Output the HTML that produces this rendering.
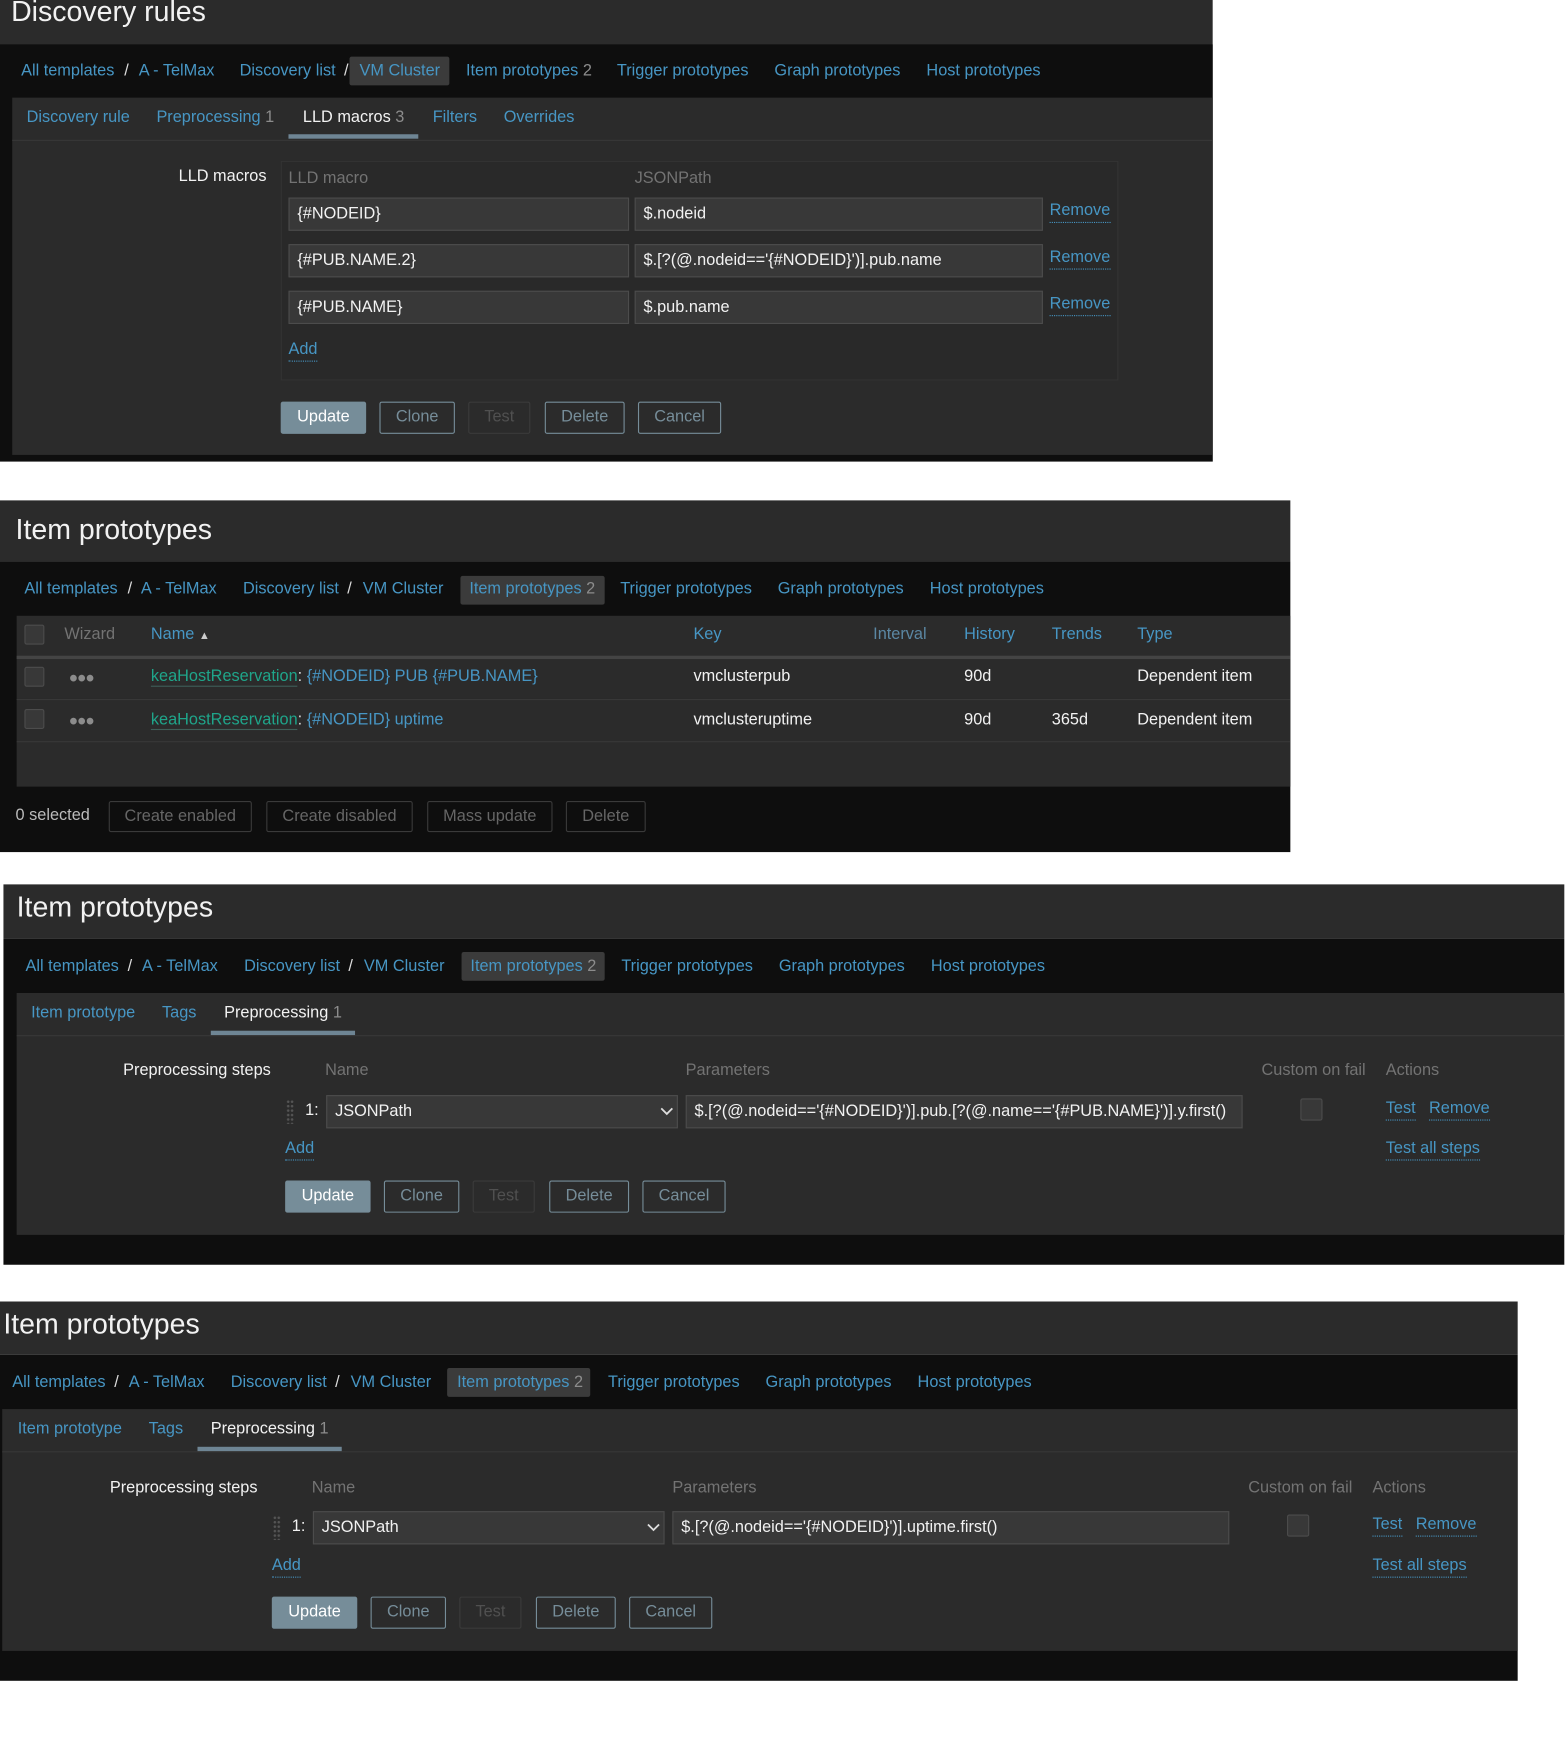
<!DOCTYPE html>
<html><head><meta charset="utf-8">
<style>
html,body{margin:0;padding:0;background:#fff;width:1565px;height:1739px;overflow:hidden}
#w{position:absolute;left:0;top:0;width:1415px;height:1572px;transform:scale(1.1095);transform-origin:0 0;font-family:"Liberation Sans",Arial,sans-serif;font-size:14.7px;color:#f2f2f2}
.a{position:absolute}
.t{position:absolute;line-height:20px;white-space:nowrap}
.tb{background:#2b2b2b}
.nav{background:#0e0e0e}
.ttl{font-size:25.7px;color:#f2f2f2;line-height:30px}
.l{color:#4796c4}
.m{color:#737373}
.g{color:#8c8c8c}
.box{position:absolute;background:#383838;border:1px solid #4c4c4c;box-sizing:border-box}
.inp{position:absolute;background:#383838;border:1px solid #4c4c4c;box-sizing:border-box;padding-left:7px;line-height:28px;white-space:nowrap;overflow:hidden;color:#f2f2f2}
.u{border-bottom:1px dotted #4796c4}
.btn{position:absolute;box-sizing:border-box;border:1px solid #768d99;border-radius:2px;color:#768d99;text-align:center;line-height:27px}
.btn.p{background:#768d99;color:#fff}
.btn.d{border-color:#3b3b3b;color:#505050}
.btn.f{border-color:#3a3a3a;color:#666;line-height:26px}
.cb{position:absolute;width:18px;height:18px;box-sizing:border-box;background:#383838;border:1px solid #4c4c4c;border-radius:2px}
.sel{position:absolute;background:#3b3b3b;border-radius:2px}
.uline{position:absolute;background:#6e8594;height:4px}
.sep{position:absolute;height:1px;background:#383838}
.dots{position:absolute;color:#8c8c8c;font-size:14px;letter-spacing:-1px;line-height:20px}
.gr{color:#1fa58a}
</style></head><body><div id="w">

<!-- PANEL 1 -->
<div class="a tb" style="left:0;top:0;width:1093px;height:416px"></div>
<div class="t ttl" style="left:10px;top:-4px">Discovery rules</div>
<div class="a nav" style="left:0;top:40px;width:1093px;height:376px"></div>
<div class="sel" style="left:315px;top:51px;width:90px;height:26px"></div>
<div class="t l" style="left:19px;top:54px">All templates</div>
<div class="t" style="left:112px;top:54px;color:#ddd">/</div>
<div class="t l" style="left:125px;top:54px">A - TelMax</div>
<div class="t l" style="left:216px;top:54px">Discovery list</div>
<div class="t" style="left:310px;top:54px;color:#ddd">/</div>
<div class="t l" style="left:324px;top:54px">VM Cluster</div>
<div class="t l" style="left:420px;top:54px">Item prototypes <span class="g">2</span></div>
<div class="t l" style="left:556px;top:54px">Trigger prototypes</div>
<div class="t l" style="left:698px;top:54px">Graph prototypes</div>
<div class="t l" style="left:835px;top:54px">Host prototypes</div>
<div class="a tb" style="left:11px;top:88px;width:1082px;height:322px"></div>
<div class="t l" style="left:24px;top:96px">Discovery rule</div>
<div class="t l" style="left:141px;top:96px">Preprocessing <span class="g">1</span></div>
<div class="t" style="left:273px;top:96px">LLD macros <span class="g">3</span></div>
<div class="t l" style="left:390px;top:96px">Filters</div>
<div class="t l" style="left:454px;top:96px">Overrides</div>
<div class="uline" style="left:260px;top:121px;width:117px"></div>
<div class="sep" style="left:11px;top:126px;width:1082px"></div>
<div class="t" style="left:161px;top:149px">LLD macros</div>
<div class="a" style="left:253px;top:145px;width:755px;height:198px;border:1px solid #333;box-sizing:border-box;background:#292929"></div>
<div class="t m" style="left:260px;top:151px">LLD macro</div>
<div class="t m" style="left:572px;top:151px">JSONPath</div>
<div class="inp" style="left:260px;top:178px;width:307px;height:30px">{#NODEID}</div>
<div class="inp" style="left:572px;top:178px;width:368px;height:30px">$.nodeid</div>
<div class="t l u" style="left:946px;top:181px;line-height:19px">Remove</div>
<div class="inp" style="left:260px;top:220px;width:307px;height:30px">{#PUB.NAME.2}</div>
<div class="inp" style="left:572px;top:220px;width:368px;height:30px">$.[?(@.nodeid=='{#NODEID}')].pub.name</div>
<div class="t l u" style="left:946px;top:223px;line-height:19px">Remove</div>
<div class="inp" style="left:260px;top:262px;width:307px;height:30px">{#PUB.NAME}</div>
<div class="inp" style="left:572px;top:262px;width:368px;height:30px">$.pub.name</div>
<div class="t l u" style="left:946px;top:265px;line-height:19px">Remove</div>
<div class="t l u" style="left:260px;top:306px;line-height:19px">Add</div>
<div class="btn p" style="left:253px;top:362px;width:77px;height:29px">Update</div>
<div class="btn" style="left:342px;top:362px;width:68px;height:29px">Clone</div>
<div class="btn d" style="left:422px;top:362px;width:56px;height:29px">Test</div>
<div class="btn" style="left:491px;top:362px;width:72px;height:29px">Delete</div>
<div class="btn" style="left:575px;top:362px;width:75px;height:29px">Cancel</div>

<!-- PANEL 2 -->
<div class="a tb" style="left:0;top:451px;width:1163px;height:55px"></div>
<div class="t ttl" style="left:14px;top:463px">Item prototypes</div>
<div class="a nav" style="left:0;top:506px;width:1163px;height:262px"></div>
<div class="sel" style="left:415px;top:519px;width:130px;height:26px"></div>
<div class="t l" style="left:22px;top:521px">All templates</div>
<div class="t" style="left:115px;top:521px;color:#ddd">/</div>
<div class="t l" style="left:127px;top:521px">A - TelMax</div>
<div class="t l" style="left:219px;top:521px">Discovery list</div>
<div class="t" style="left:313px;top:521px;color:#ddd">/</div>
<div class="t l" style="left:327px;top:521px">VM Cluster</div>
<div class="t l" style="left:423px;top:521px">Item prototypes <span class="g">2</span></div>
<div class="t l" style="left:559px;top:521px">Trigger prototypes</div>
<div class="t l" style="left:701px;top:521px">Graph prototypes</div>
<div class="t l" style="left:838px;top:521px">Host prototypes</div>
<div class="a tb" style="left:15px;top:555px;width:1148px;height:154px"></div>
<div class="cb" style="left:22px;top:563px"></div>
<div class="t m" style="left:58px;top:562px">Wizard</div>
<div class="t l" style="left:136px;top:562px">Name <span style="font-size:10px;color:#ccc">▲</span></div>
<div class="t l" style="left:625px;top:562px">Key</div>
<div class="t" style="left:787px;top:562px;color:#5b87a3">Interval</div>
<div class="t l" style="left:869px;top:562px">History</div>
<div class="t l" style="left:948px;top:562px">Trends</div>
<div class="t l" style="left:1025px;top:562px">Type</div>
<div class="a" style="left:15px;top:591px;width:1148px;height:3px;background:#444"></div>
<div class="cb" style="left:22px;top:601px"></div>
<div class="dots" style="left:62px;top:600px">●●●</div>
<div class="t" style="left:136px;top:600px"><span class="gr" style="border-bottom:1px solid #3f5e58">keaHostReservation</span><span style="color:#ddd">:</span> <span class="l">{#NODEID} PUB {#PUB.NAME}</span></div>
<div class="t" style="left:625px;top:600px">vmclusterpub</div>
<div class="t" style="left:869px;top:600px">90d</div>
<div class="t" style="left:1025px;top:600px">Dependent item</div>
<div class="sep" style="left:15px;top:630px;width:1148px"></div>
<div class="cb" style="left:22px;top:639px"></div>
<div class="dots" style="left:62px;top:639px">●●●</div>
<div class="t" style="left:136px;top:639px"><span class="gr" style="border-bottom:1px solid #3f5e58">keaHostReservation</span><span style="color:#ddd">:</span> <span class="l">{#NODEID} uptime</span></div>
<div class="t" style="left:625px;top:639px">vmclusteruptime</div>
<div class="t" style="left:869px;top:639px">90d</div>
<div class="t" style="left:948px;top:639px">365d</div>
<div class="t" style="left:1025px;top:639px">Dependent item</div>
<div class="sep" style="left:15px;top:668px;width:1148px"></div>
<div class="t" style="left:14px;top:725px;color:#bbb">0 selected</div>
<div class="btn f" style="left:98px;top:722px;width:129px;height:28px">Create enabled</div>
<div class="btn f" style="left:240px;top:722px;width:132px;height:28px">Create disabled</div>
<div class="btn f" style="left:385px;top:722px;width:113px;height:28px">Mass update</div>
<div class="btn f" style="left:510px;top:722px;width:72px;height:28px">Delete</div>

<!-- PANEL 3 -->
<div class="a" style="left:3px;top:797px;width:1407px;height:343px;overflow:hidden">
<div class="a tb" style="left:0;top:0;width:1407px;height:49px"></div>
<div class="t ttl" style="left:12px;top:6px">Item prototypes</div>
<div class="a nav" style="left:0;top:49px;width:1407px;height:294px"></div>
<div class="sel" style="left:413px;top:61px;width:129px;height:26px"></div>
<div class="t l" style="left:20px;top:64px">All templates</div>
<div class="t" style="left:112px;top:64px;color:#ddd">/</div>
<div class="t l" style="left:125px;top:64px">A - TelMax</div>
<div class="t l" style="left:217px;top:64px">Discovery list</div>
<div class="t" style="left:311px;top:64px;color:#ddd">/</div>
<div class="t l" style="left:325px;top:64px">VM Cluster</div>
<div class="t l" style="left:421px;top:64px">Item prototypes <span class="g">2</span></div>
<div class="t l" style="left:557px;top:64px">Trigger prototypes</div>
<div class="t l" style="left:699px;top:64px">Graph prototypes</div>
<div class="t l" style="left:836px;top:64px">Host prototypes</div>
<div class="a tb" style="left:12px;top:98px;width:1395px;height:218px"></div>
<div class="t l" style="left:25px;top:106px">Item prototype</div>
<div class="t l" style="left:143px;top:106px">Tags</div>
<div class="t" style="left:199px;top:106px">Preprocessing <span class="g">1</span></div>
<div class="uline" style="left:187px;top:132px;width:130px"></div>
<div class="sep" style="left:12px;top:136px;width:1395px"></div>
<div class="t" style="left:108px;top:158px">Preprocessing steps</div>
<div class="t m" style="left:290px;top:158px">Name</div>
<div class="t m" style="left:615px;top:158px">Parameters</div>
<div class="t m" style="left:1134px;top:158px">Custom on fail</div>
<div class="t m" style="left:1246px;top:158px">Actions</div>
<div class="a" style="left:255px;top:194px;width:7px;height:22px;background-image:radial-gradient(circle,#555 1px,transparent 1.3px);background-size:3.5px 4px"></div>
<div class="t" style="left:272px;top:194px">1:</div>
<div class="inp" style="left:291px;top:190px;width:317px;height:30px">JSONPath</div>
<svg class="a" style="left:592px;top:200px" width="12" height="9" viewBox="0 0 12 9"><path d="M1 2 L6 7 L11 2" stroke="#ddd" stroke-width="1.6" fill="none"/></svg>
<div class="inp" style="left:615px;top:190px;width:502px;height:30px">$.[?(@.nodeid=='{#NODEID}')].pub.[?(@.name=='{#PUB.NAME}')].y.first()</div>
<div class="cb" style="left:1169px;top:193px;width:20px;height:20px"></div>
<div class="t l u" style="left:1246px;top:193px;line-height:19px">Test</div>
<div class="t l u" style="left:1285px;top:193px;line-height:19px">Remove</div>
<div class="t l u" style="left:254px;top:229px;line-height:19px">Add</div>
<div class="t l u" style="left:1246px;top:229px;line-height:19px">Test all steps</div>
<div class="btn p" style="left:254px;top:267px;width:77px;height:29px">Update</div>
<div class="btn" style="left:343px;top:267px;width:68px;height:29px">Clone</div>
<div class="btn d" style="left:423px;top:267px;width:56px;height:29px">Test</div>
<div class="btn" style="left:492px;top:267px;width:72px;height:29px">Delete</div>
<div class="btn" style="left:576px;top:267px;width:75px;height:29px">Cancel</div>
</div>

<!-- PANEL 4 -->
<div class="a" style="left:0;top:1173px;width:1368px;height:342px;overflow:hidden">
<div class="a" style="left:-12px;top:0;width:1380px;height:342px">
<div class="a tb" style="left:0;top:0;width:1380px;height:48px"></div>
<div class="t ttl" style="left:15px;top:6px">Item prototypes</div>
<div class="a nav" style="left:0;top:48px;width:1380px;height:294px"></div>
<div class="sel" style="left:415px;top:60px;width:129px;height:26px"></div>
<div class="t l" style="left:23px;top:63px">All templates</div>
<div class="t" style="left:115px;top:63px;color:#ddd">/</div>
<div class="t l" style="left:128px;top:63px">A - TelMax</div>
<div class="t l" style="left:220px;top:63px">Discovery list</div>
<div class="t" style="left:314px;top:63px;color:#ddd">/</div>
<div class="t l" style="left:328px;top:63px">VM Cluster</div>
<div class="t l" style="left:424px;top:63px">Item prototypes <span class="g">2</span></div>
<div class="t l" style="left:560px;top:63px">Trigger prototypes</div>
<div class="t l" style="left:702px;top:63px">Graph prototypes</div>
<div class="t l" style="left:839px;top:63px">Host prototypes</div>
<div class="a tb" style="left:14px;top:97px;width:1366px;height:218px"></div>
<div class="t l" style="left:28px;top:105px">Item prototype</div>
<div class="t l" style="left:146px;top:105px">Tags</div>
<div class="t" style="left:202px;top:105px">Preprocessing <span class="g">1</span></div>
<div class="uline" style="left:190px;top:131px;width:130px"></div>
<div class="sep" style="left:14px;top:135px;width:1366px"></div>
<div class="t" style="left:111px;top:158px">Preprocessing steps</div>
<div class="t m" style="left:293px;top:158px">Name</div>
<div class="t m" style="left:618px;top:158px">Parameters</div>
<div class="t m" style="left:1137px;top:158px">Custom on fail</div>
<div class="t m" style="left:1249px;top:158px">Actions</div>
<div class="a" style="left:258px;top:193px;width:7px;height:22px;background-image:radial-gradient(circle,#555 1px,transparent 1.3px);background-size:3.5px 4px"></div>
<div class="t" style="left:275px;top:193px">1:</div>
<div class="inp" style="left:294px;top:189px;width:317px;height:30px">JSONPath</div>
<svg class="a" style="left:595px;top:199px" width="12" height="9" viewBox="0 0 12 9"><path d="M1 2 L6 7 L11 2" stroke="#ddd" stroke-width="1.6" fill="none"/></svg>
<div class="inp" style="left:618px;top:189px;width:502px;height:30px">$.[?(@.nodeid=='{#NODEID}')].uptime.first()</div>
<div class="cb" style="left:1172px;top:192px;width:20px;height:20px"></div>
<div class="t l u" style="left:1249px;top:192px;line-height:19px">Test</div>
<div class="t l u" style="left:1288px;top:192px;line-height:19px">Remove</div>
<div class="t l u" style="left:257px;top:229px;line-height:19px">Add</div>
<div class="t l u" style="left:1249px;top:229px;line-height:19px">Test all steps</div>
<div class="btn p" style="left:257px;top:266px;width:77px;height:29px">Update</div>
<div class="btn" style="left:346px;top:266px;width:68px;height:29px">Clone</div>
<div class="btn d" style="left:426px;top:266px;width:56px;height:29px">Test</div>
<div class="btn" style="left:495px;top:266px;width:72px;height:29px">Delete</div>
<div class="btn" style="left:579px;top:266px;width:75px;height:29px">Cancel</div>
</div>
</div>

</div></body></html>
